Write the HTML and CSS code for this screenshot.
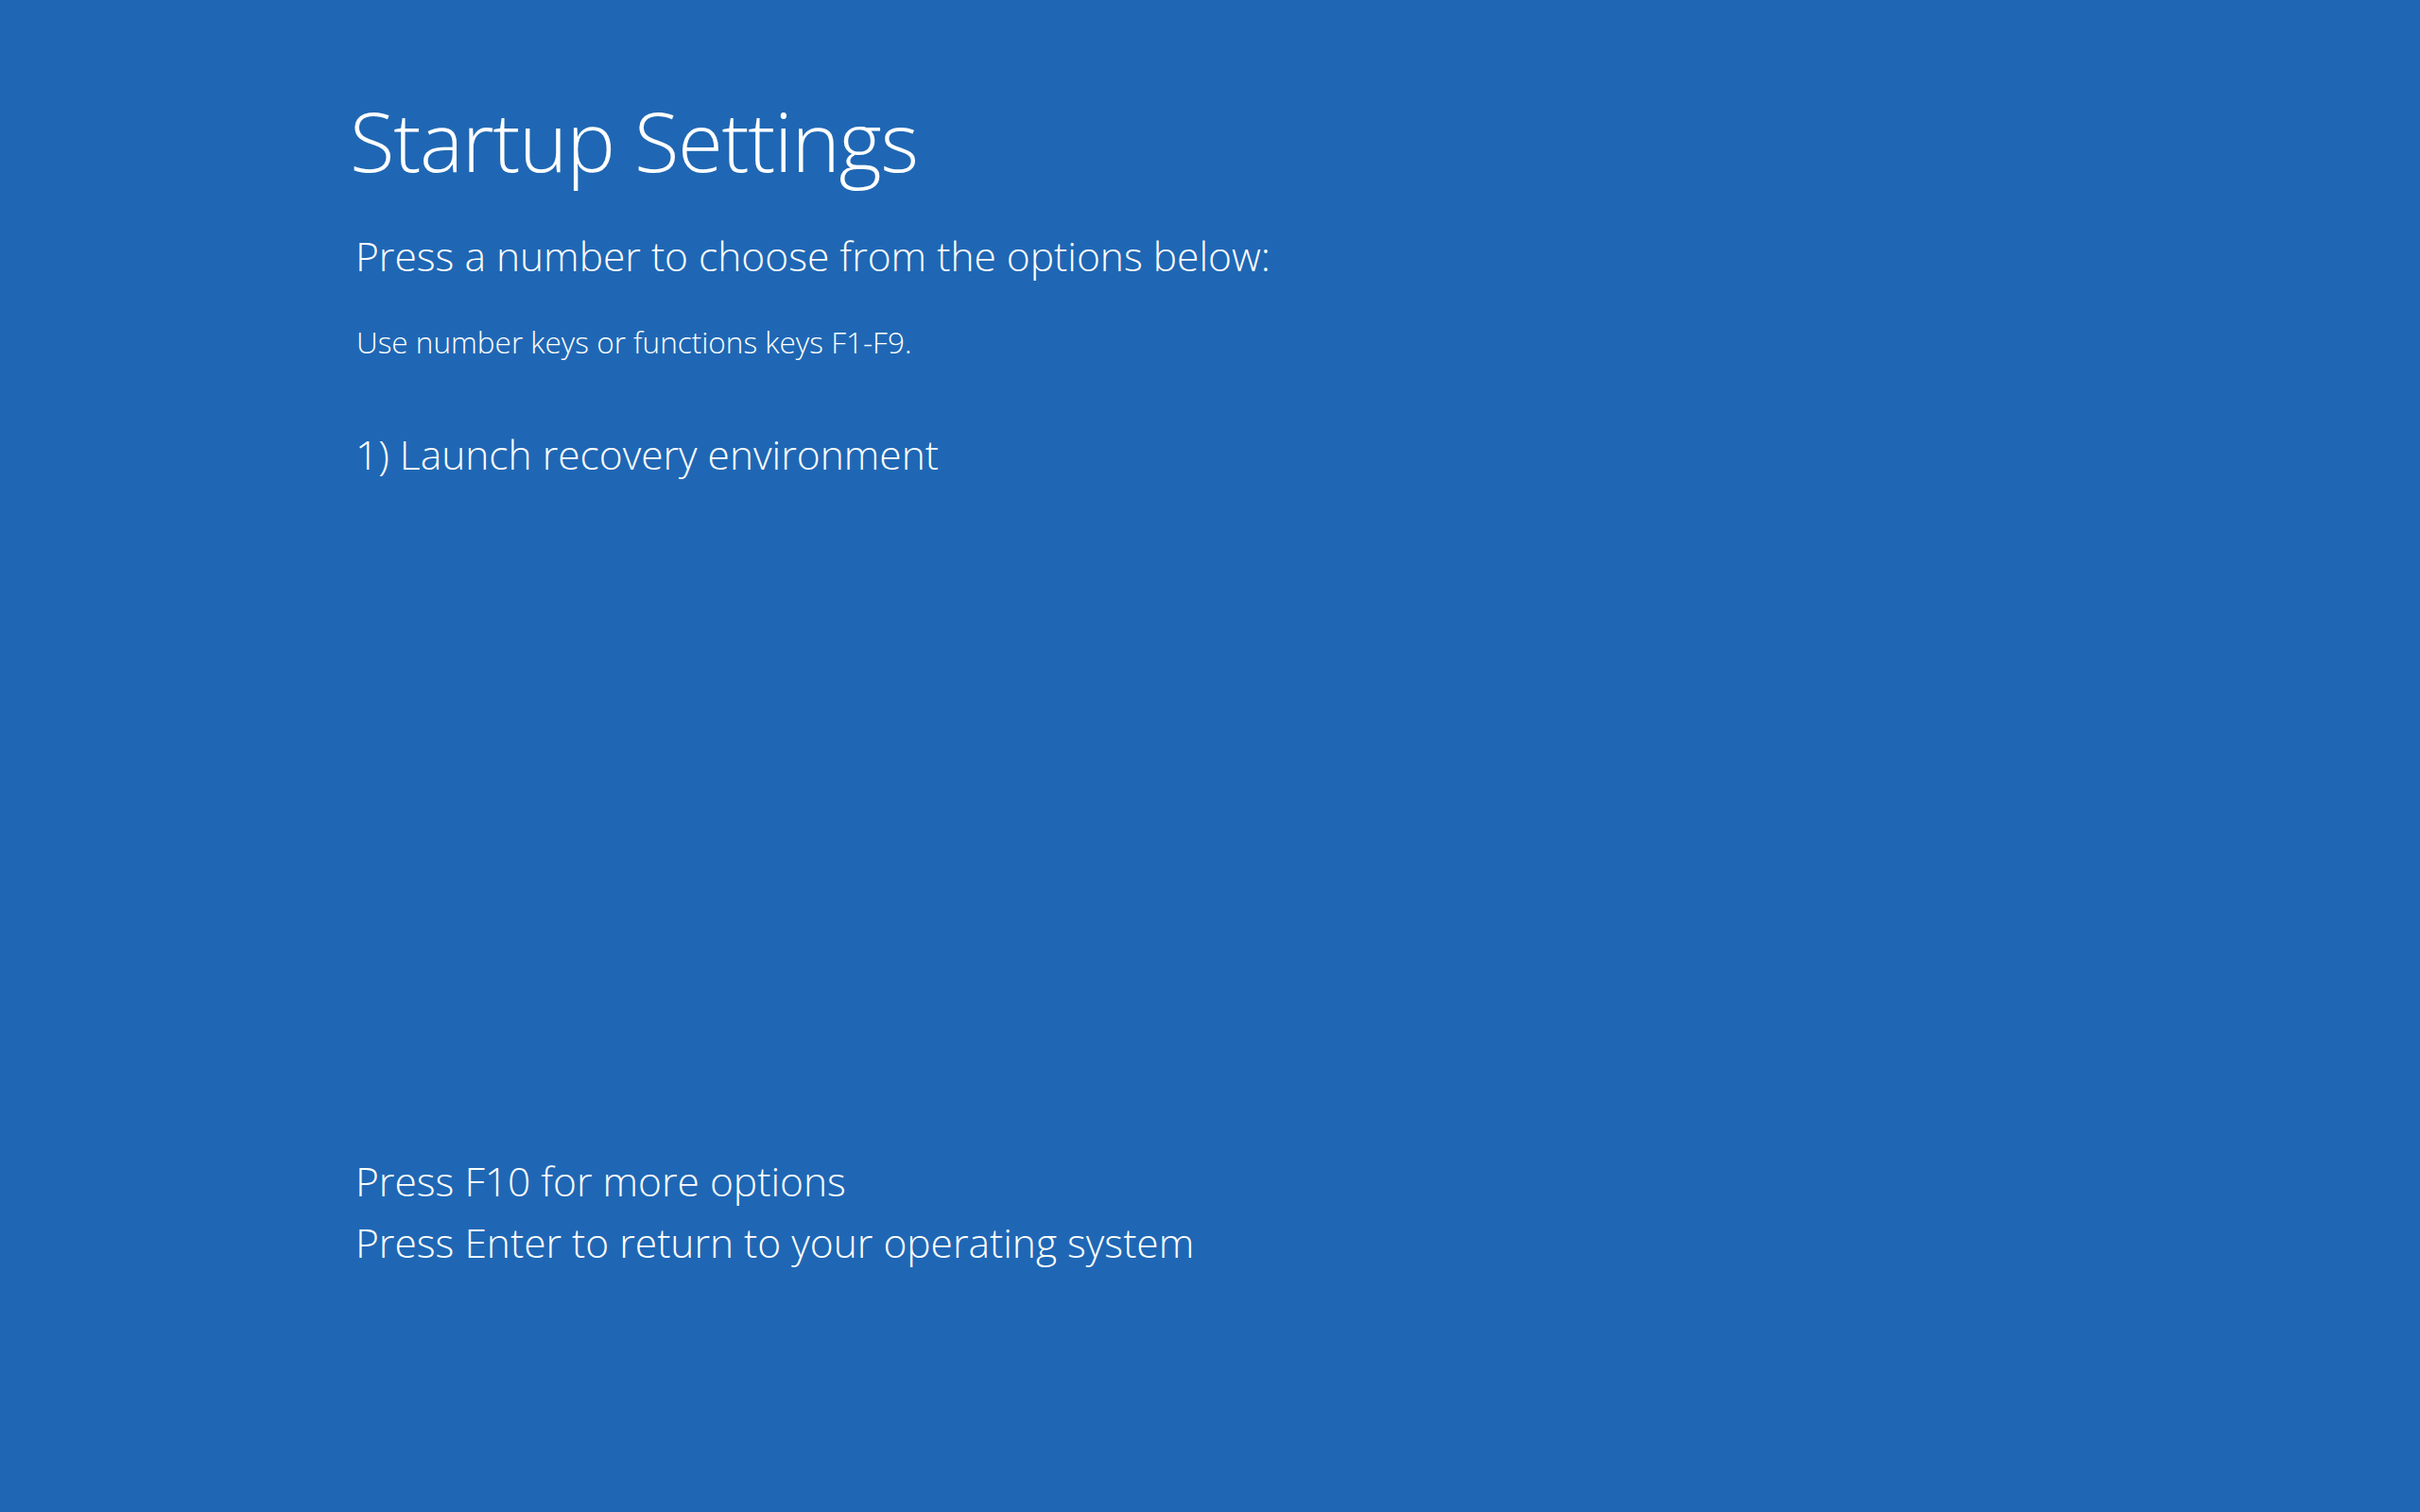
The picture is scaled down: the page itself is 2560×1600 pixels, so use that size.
FILE: index.html
```html
<!DOCTYPE html>
<html lang="en">
<head>
<meta charset="utf-8">
<title>Startup Settings</title>
<link rel="stylesheet" href="styles.css">
</head>
<body>
<main class="screen">
  <h1 class="title">Startup Settings</h1>
  <p class="prompt">Press a number to choose from the options below:</p>
  <p class="hint">Use number keys or functions keys F1-F9.</p>
  <ol class="options">
    <li class="option">1) Launch recovery environment</li>
  </ol>
  <div class="footer">
    <p class="footer-line">Press F10 for more options</p>
    <p class="footer-line">Press Enter to return to your operating system</p>
  </div>
</main>
</body>
</html>
```

FILE: styles.css
```css
html, body {
  margin: 0;
  padding: 0;
  height: 100%;
  background: #1f67b4;
}

body {
  color: #ffffff;
  font-family: "Open Sans", "Noto Sans", sans-serif;
  font-weight: 300;
  -webkit-font-smoothing: antialiased;
}

.screen {
  display: flex;
  flex-direction: column;
  padding: 105px 0 0 370px;
  box-sizing: border-box;
  height: 100%;
}

.title {
  margin: 0;
  font-size: 87px;
  font-weight: 300;
  letter-spacing: -0.015em;
  line-height: 1;
}

.prompt {
  margin: 58px 0 0 6px;
  font-size: 42.5px;
  line-height: 1;
}

.hint {
  margin: 53px 0 0 7px;
  font-size: 31.5px;
  line-height: 1;
}

.options {
  list-style: none;
  margin: 83px 0 0 6px;
  padding: 0;
}

.option {
  font-size: 42.5px;
  line-height: 1;
}

.footer {
  display: flex;
  flex-direction: column;
  gap: 23px;
  margin: 726px 0 0 6px;
}

.footer-line {
  margin: 0;
  font-size: 42.5px;
  line-height: 1;
}
```
